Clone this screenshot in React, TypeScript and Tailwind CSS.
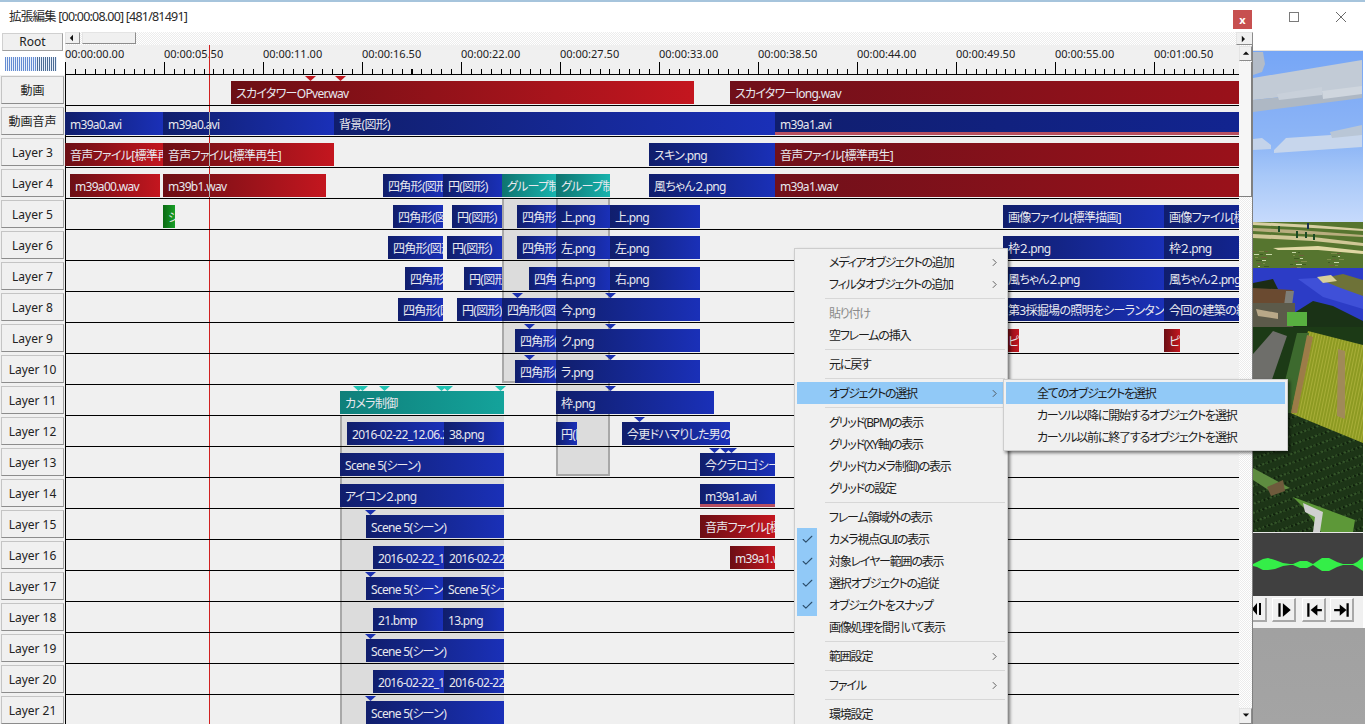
import { Check } from "lucide-react";

type Kind = "blue" | "blueLong" | "red" | "redLong" | "teal" | "tealSoft" | "green";
type Clip = { x: number; end: number; label: string; kind?: Kind; strip?: boolean };
type Mark = { x: number; color: "red" | "blue" | "teal" };

const kinds: Record<Kind, string> = {
  blue: "bg-linear-to-r from-[#101e6c] to-[#1a30b8]",
  blueLong: "bg-linear-to-r from-[#101e6e] to-[#122490]",
  red: "bg-linear-to-r from-[#6c0e14] to-[#c4161f]",
  redLong: "bg-linear-to-r from-[#70101a] to-[#9a111a]",
  teal: "bg-linear-to-r from-[#0f7470] to-[#18b4ae]",
  tealSoft: "bg-linear-to-r from-[#0f7f7a] to-[#14a39b]",
  green: "bg-linear-to-r from-[#0c6a14] to-[#18a028]",
};

const markColors = {
  red: "bg-[#c01820]",
  blue: "bg-[#1a30b0]",
  teal: "bg-[#22c4b4]",
};

const CURSOR = 209;
const LEFT = 65;

const rows: { name: string; clips: Clip[]; marks?: Mark[] }[] = [
  {
    name: "動画",
    marks: [
      { x: 310, color: "red" },
      { x: 340, color: "red" },
    ],
    clips: [
      { x: 231, end: 694, label: "スカイタワーOPver.wav", kind: "red" },
      { x: 730, end: 1239, label: "スカイタワーlong.wav", kind: "redLong" },
    ],
  },
  {
    name: "動画音声",
    clips: [
      { x: 65, end: 163, label: "m39a0.avi" },
      { x: 163, end: 334, label: "m39a0.avi" },
      { x: 334, end: 775, label: "背景(図形)" },
      { x: 775, end: 1239, label: "m39a1.avi", kind: "blueLong", strip: true },
    ],
  },
  {
    name: "Layer 3",
    clips: [
      { x: 65, end: 163, label: "音声ファイル[標準再生]", kind: "red" },
      { x: 163, end: 334, label: "音声ファイル[標準再生]", kind: "red" },
      { x: 649, end: 775, label: "スキン.png" },
      { x: 775, end: 1239, label: "音声ファイル[標準再生]", kind: "redLong" },
    ],
  },
  {
    name: "Layer 4",
    clips: [
      { x: 70, end: 160, label: "m39a00.wav", kind: "red" },
      { x: 163, end: 326, label: "m39b1.wav", kind: "red" },
      { x: 383, end: 443, label: "四角形(図形)" },
      { x: 443, end: 502, label: "円(図形)" },
      { x: 502, end: 556, label: "グループ制御", kind: "teal" },
      { x: 556, end: 610, label: "グループ制御", kind: "teal" },
      { x: 649, end: 775, label: "風ちゃん２.png" },
      { x: 775, end: 1239, label: "m39a1.wav", kind: "redLong" },
    ],
  },
  {
    name: "Layer 5",
    clips: [
      { x: 163, end: 175, label: "シーン", kind: "green" },
      { x: 393, end: 443, label: "四角形(図形)" },
      { x: 452, end: 502, label: "円(図形)" },
      { x: 517, end: 556, label: "四角形(図形)" },
      { x: 556, end: 610, label: "上.png" },
      { x: 610, end: 700, label: "上.png" },
      { x: 1003, end: 1164, label: "画像ファイル[標準描画]" },
      { x: 1164, end: 1239, label: "画像ファイル[標準描画]", kind: "blueLong" },
    ],
  },
  {
    name: "Layer 6",
    clips: [
      { x: 388, end: 443, label: "四角形(図形)" },
      { x: 447, end: 502, label: "円(図形)" },
      { x: 517, end: 556, label: "四角形(図形)" },
      { x: 556, end: 610, label: "左.png" },
      { x: 610, end: 700, label: "左.png" },
      { x: 1003, end: 1164, label: "枠２.png" },
      { x: 1164, end: 1239, label: "枠２.png", kind: "blueLong" },
    ],
  },
  {
    name: "Layer 7",
    clips: [
      { x: 405, end: 443, label: "四角形(図形)" },
      { x: 464, end: 502, label: "円(図形)" },
      { x: 529, end: 556, label: "四角形(図形)" },
      { x: 556, end: 610, label: "右.png" },
      { x: 610, end: 700, label: "右.png" },
      { x: 1003, end: 1164, label: "風ちゃん２.png" },
      { x: 1164, end: 1239, label: "風ちゃん２.png", kind: "blueLong" },
    ],
  },
  {
    name: "Layer 8",
    marks: [
      { x: 517, color: "blue" },
      { x: 610, color: "blue" },
    ],
    clips: [
      { x: 398, end: 443, label: "四角形(図形)" },
      { x: 457, end: 502, label: "円(図形)" },
      { x: 502, end: 556, label: "四角形(図形)" },
      { x: 556, end: 700, label: "今.png" },
      { x: 1003, end: 1164, label: "第3採掘場の照明をシーランタンに" },
      { x: 1164, end: 1239, label: "今回の建築の紹介", kind: "blueLong" },
    ],
  },
  {
    name: "Layer 9",
    marks: [
      { x: 529, color: "blue" },
      { x: 610, color: "blue" },
    ],
    clips: [
      { x: 515, end: 556, label: "四角形(図形)" },
      { x: 556, end: 700, label: "ク.png" },
      { x: 1003, end: 1019, label: "ピース", kind: "red" },
      { x: 1164, end: 1180, label: "ピース", kind: "red" },
    ],
  },
  {
    name: "Layer 10",
    marks: [
      { x: 529, color: "blue" },
      { x: 610, color: "blue" },
    ],
    clips: [
      { x: 515, end: 556, label: "四角形(図形)" },
      { x: 556, end: 700, label: "ラ.png" },
    ],
  },
  {
    name: "Layer 11",
    marks: [
      { x: 358, color: "teal" },
      { x: 362, color: "teal" },
      { x: 384, color: "teal" },
      { x: 441, color: "teal" },
      { x: 447, color: "teal" },
      { x: 500, color: "teal" },
      { x: 610, color: "blue" },
    ],
    clips: [
      { x: 340, end: 504, label: "カメラ制御", kind: "tealSoft" },
      { x: 556, end: 714, label: "枠.png" },
    ],
  },
  {
    name: "Layer 12",
    marks: [{ x: 639, color: "blue" }],
    clips: [
      { x: 347, end: 444, label: "2016-02-22_12.06.25" },
      { x: 444, end: 504, label: "38.png" },
      { x: 556, end: 577, label: "円(図形)" },
      { x: 622, end: 730, label: "今更ドハマりした男の末路" },
    ],
  },
  {
    name: "Layer 13",
    marks: [
      { x: 714, color: "blue" },
      { x: 725, color: "blue" },
      { x: 731, color: "blue" },
    ],
    clips: [
      { x: 340, end: 504, label: "Scene 5(シーン)" },
      { x: 700, end: 775, label: "今クラロゴシーン" },
    ],
  },
  {
    name: "Layer 14",
    clips: [
      { x: 340, end: 504, label: "アイコン２.png" },
      { x: 700, end: 775, label: "m39a1.avi", strip: true },
    ],
  },
  {
    name: "Layer 15",
    marks: [{ x: 370, color: "blue" }],
    clips: [
      { x: 366, end: 504, label: "Scene 5(シーン)" },
      { x: 700, end: 775, label: "音声ファイル[標準再生]", kind: "red" },
    ],
  },
  {
    name: "Layer 16",
    clips: [
      { x: 373, end: 444, label: "2016-02-22_12.06" },
      { x: 444, end: 504, label: "2016-02-22_12.06" },
      { x: 730, end: 775, label: "m39a1.wav", kind: "red" },
    ],
  },
  {
    name: "Layer 17",
    marks: [{ x: 370, color: "blue" }],
    clips: [
      { x: 366, end: 443, label: "Scene 5(シーン)" },
      { x: 443, end: 504, label: "Scene 5(シーン)" },
    ],
  },
  {
    name: "Layer 18",
    clips: [
      { x: 373, end: 443, label: "21.bmp" },
      { x: 443, end: 504, label: "13.png" },
    ],
  },
  {
    name: "Layer 19",
    marks: [{ x: 370, color: "blue" }],
    clips: [{ x: 366, end: 504, label: "Scene 5(シーン)" }],
  },
  {
    name: "Layer 20",
    clips: [
      { x: 373, end: 444, label: "2016-02-22_12.06" },
      { x: 444, end: 504, label: "2016-02-22_12.06" },
    ],
  },
  {
    name: "Layer 21",
    marks: [{ x: 370, color: "blue" }],
    clips: [{ x: 366, end: 504, label: "Scene 5(シーン)" }],
  },
];

const rulerLabels = [
  "00:00:00.00",
  "00:00:05.50",
  "00:00:11.00",
  "00:00:16.50",
  "00:00:22.00",
  "00:00:27.50",
  "00:00:33.00",
  "00:00:38.50",
  "00:00:44.00",
  "00:00:49.50",
  "00:00:55.00",
  "00:01:00.50",
];

// gray group backgrounds behind the clips
const groups = [
  { x: 502, y: 198, w: 54, h: 185, cls: "border-l-2 border-b-2" },
  { x: 556, y: 198, w: 54, h: 278, cls: "border-x-2 border-b-2" },
  { x: 340, y: 416, w: 164, h: 310, cls: "border-l-2" },
];

const menu: (
  | { sep: true }
  | { label: string; arrow?: boolean; off?: boolean; checked?: boolean; hot?: boolean }
)[] = [
  { label: "メディアオブジェクトの追加", arrow: true },
  { label: "フィルタオブジェクトの追加", arrow: true },
  { sep: true },
  { label: "貼り付け", off: true },
  { label: "空フレームの挿入" },
  { sep: true },
  { label: "元に戻す" },
  { sep: true },
  { label: "オブジェクトの選択", arrow: true, hot: true },
  { sep: true },
  { label: "グリッド(BPM)の表示" },
  { label: "グリッド(XY軸)の表示" },
  { label: "グリッド(カメラ制御)の表示" },
  { label: "グリッドの設定" },
  { sep: true },
  { label: "フレーム領域外の表示" },
  { label: "カメラ視点GUIの表示", checked: true },
  { label: "対象レイヤー範囲の表示", checked: true },
  { label: "選択オブジェクトの追従", checked: true },
  { label: "オブジェクトをスナップ", checked: true },
  { label: "画像処理を間引いて表示" },
  { sep: true },
  { label: "範囲設定", arrow: true },
  { sep: true },
  { label: "ファイル", arrow: true },
  { sep: true },
  { label: "環境設定" },
];

const Arrow = ({ dir, className = "" }: { dir: "l" | "r" | "u" | "d"; className?: string }) => {
  const pts = { l: "5,1 5,9 1,5", r: "1,1 1,9 5,5", u: "1,6 9,6 5,2", d: "1,2 9,2 5,6" }[dir];
  return (
    <svg viewBox="0 0 10 10" className={`w-[8px] h-[8px] ${className}`}>
      <polygon points={pts} fill="#111" />
    </svg>
  );
};

const raised =
  "border border-t-[#e4e4e4] border-l-[#e4e4e4] border-r-[#8c8c8c] border-b-[#8c8c8c] bg-[#f0f0f0]";
const hatch = "bg-[repeating-conic-gradient(#ffffff_0_25%,#ececec_0_50%)] bg-[length:2px_2px]";

function LayerButton({ name }: { name: string }) {
  return (
    <div className="h-[31px] pl-px pt-px shrink-0">
      <div className="w-[63px] h-[28px] pt-[2px] border border-t-[#c4c4c4] border-l-[#c4c4c4] border-r-[#a0a0a0] border-b-[#8c8c8c] bg-[#f0f0f0] flex items-center justify-center text-[12px] text-[#222]">
        {name}
      </div>
    </div>
  );
}

function ClipBar({ clip }: { clip: Clip }) {
  return (
    <div
      className={`absolute top-[6px] h-[23px] overflow-hidden whitespace-nowrap pl-[5px] text-[12px] tracking-[-0.7px] leading-[26px] text-[#e8e8ee] ${kinds[clip.kind ?? "blue"]}`}
      style={{ left: clip.x - LEFT, width: clip.end - clip.x }}
    >
      {clip.label}
      {clip.strip && <div className="absolute bottom-0 inset-x-0 h-[3px] bg-[#b85060]" />}
    </div>
  );
}

function Row({ row }: { row: (typeof rows)[number] }) {
  const overCursor = row.clips.some((c) => c.x <= CURSOR && c.end > CURSOR);
  return (
    <div className="relative h-[31px] shrink-0 border-b border-black">
      {row.marks?.map((m, i) => (
        <div
          key={i}
          className={`absolute top-px w-[11px] h-[5px] [clip-path:polygon(0_0,100%_0,50%_100%)] ${markColors[m.color]}`}
          style={{ left: m.x - LEFT - 5 }}
        />
      ))}
      {row.clips.map((c, i) => (
        <ClipBar key={i} clip={c} />
      ))}
      {overCursor && (
        <div
          className="absolute top-[6px] h-[23px] w-px bg-[#a8b0b0]"
          style={{ left: CURSOR - LEFT }}
        />
      )}
    </div>
  );
}

function Ruler() {
  return (
    <div className="relative flex h-[30px] border-b border-black overflow-hidden bg-[#f0f0f0] shrink-0">
      {rulerLabels.map((t) => (
        <div key={t} className="w-[99px] shrink-0 flex flex-col">
          <div className="h-[17px] text-[11px] leading-[17px] text-[#222] whitespace-nowrap">{t}</div>
          <div className="relative flex-1">
            <div className="absolute left-0 bottom-0 h-[12px] w-px bg-black" />
            <div className="absolute inset-x-0 bottom-0 h-[5px] bg-[repeating-linear-gradient(90deg,#000_0_1px,transparent_1px_9.9px)]" />
          </div>
        </div>
      ))}
      <div className="absolute top-0 bottom-0 left-[144px] w-px bg-[#d02020]" />
    </div>
  );
}

function ContextMenu() {
  return (
    <div className="absolute left-[794px] top-[248px] w-[214px] h-[480px] py-[2px] px-[2px] bg-[#f0f0f0] border border-[#cdcdcd] shadow-[2px_2px_3px_rgba(0,0,0,0.5)] text-[12px] tracking-[-1.2px] text-[#1c1c1c]">
      {menu.map((m, i) =>
        "sep" in m ? (
          <div key={i} className="h-[7px] pl-[28px] flex items-center">
            <div className="h-px w-full bg-[#d7d7d7]" />
          </div>
        ) : (
          <div key={i} className={`h-[22px] flex items-center ${m.hot ? "bg-[#91c9f7]" : ""}`}>
            <div
              className={`w-[20px] h-full flex items-center justify-center shrink-0 ${m.checked ? "bg-[#91c9f7]" : ""}`}
            >
              {m.checked && <Check size={13} strokeWidth={2} className="text-[#2d4f6c]" />}
            </div>
            <span className={`ml-[12px] pt-px whitespace-nowrap flex-1 ${m.off ? "text-[#8a8a8a]" : ""}`}>{m.label}</span>
            {m.arrow && (
              <svg viewBox="0 0 6 10" className="w-[5px] h-[9px] mr-[8px]">
                <path d="M1 1l4 4-4 4" fill="none" stroke="#444" strokeWidth="1" />
              </svg>
            )}
          </div>
        )
      )}
    </div>
  );
}

function SubMenu() {
  const items = ["全てのオブジェクトを選択", "カーソル以降に開始するオブジェクトを選択", "カーソル以前に終了するオブジェクトを選択"];
  return (
    <div className="absolute left-[1003px] top-[379px] w-[285px] h-[72px] p-[2px] bg-[#f0f0f0] border border-[#cdcdcd] shadow-[2px_2px_3px_rgba(0,0,0,0.5)] text-[12px] tracking-[-1.2px] text-[#1c1c1c]">
      {items.map((t, i) => (
        <div key={t} className={`h-[22px] flex items-center pl-[31px] pt-px whitespace-nowrap ${i === 0 ? "bg-[#91c9f7]" : ""}`}>
          {t}
        </div>
      ))}
    </div>
  );
}

// dots for the leaf blocks in the game picture
const leafDots = Array.from({ length: 26 }, (_, i) => ({
  x: (i * 7) % 12,
  y: (i * 5) % 12,
  c: i % 3 === 0 ? "#35562a" : i % 3 === 1 ? "#0f1f0c" : "#28461f",
}));

// speckle and dirt lines on the far fields
const fieldSpecks = Array.from({ length: 40 }, (_, i) => ({
  x: (i * 37) % 110,
  y: 200 + ((i * 13) % 18),
  w: 2 + (i % 5),
  c: i % 4 === 0 ? "#6f5e3a" : i % 4 === 1 ? "#3f5c22" : i % 4 === 2 ? "#7d8c4a" : "#c8d8a8",
}));

function GameView() {
  return (
    <div className="w-[110px] h-[481px] bg-[linear-gradient(#76a6f6_0,#86b0f6_60px,#8fb7f6_95px,#a8c8f8_125px,#c6dafc_171px,#c6dafc_100%)]">
      <svg viewBox="0 0 110 481" className="w-[110px] h-[481px] block" preserveAspectRatio="none">
        <defs>
          <pattern id="leaf" width="12" height="12" patternUnits="userSpaceOnUse" patternTransform="rotate(25)">
            <rect width="12" height="12" fill="#1d3517" />
            {leafDots.map((d, i) => (
              <rect key={i} x={d.x} y={d.y} width="2" height="2" fill={d.c} />
            ))}
          </pattern>
          <pattern id="farm" width="3" height="4" patternUnits="userSpaceOnUse" patternTransform="rotate(12)">
            <rect width="3" height="4" fill="#8d9a22" />
            <rect width="1" height="4" fill="#a8ae38" />
          </pattern>
        </defs>
        {/* clouds */}
        <polygon points="0,27 109,9 109,37 0,49" fill="#c2cbd6" />
        <polygon points="0,49 109,37 109,47 0,61" fill="#aeb8c4" />
        <polygon points="24,43 69,36 69,44 26,49" fill="#c8d0da" />
        <polygon points="69,40 109,35 109,43 70,48" fill="#cfd6de" />
        <polygon points="0,1 10,1 12,13 9,21 0,24" fill="#b3bcc8" />
        <polygon points="21,99 33,87 78,84 109,75 109,96 21,102" fill="#c7d6ec" />
        <polygon points="77,81 109,74 109,84 79,87" fill="#b9c6d6" />
        <polygon points="0,88 9,87 18,94 18,98 0,99" fill="#c4d3ea" />
        {/* land */}
        <rect y="171" width="110" height="60" fill="#56752f" />
        {fieldSpecks.map((s, i) => (
          <rect key={i} x={s.x} y={s.y} width={s.w} height="1" fill={s.c} />
        ))}
        <polygon points="0,171 60,174 110,178 110,180 60,177 0,174" fill="#d8cfa2" />
        <polygon points="0,177 45,179 110,184 110,186 50,183 0,180" fill="#b8ad7e" />
        <polygon points="0,183 60,186 110,192 110,195 60,190 0,187" fill="#d0c796" />
        <polygon points="20,197 65,195 110,200 110,203 65,199 25,199" fill="#e0d8a4" />
        <rect x="25" y="175" width="2" height="6" fill="#1c4a24" />
        <rect x="54" y="172" width="2" height="6" fill="#1a3050" />
        <rect x="43" y="180" width="2" height="7" fill="#1c4a24" />
        <rect x="52" y="181" width="2" height="6" fill="#1c4a24" />
        <rect x="60" y="183" width="2" height="6" fill="#1c4a24" />
        {/* water */}
        <rect y="217" width="110" height="60" fill="#2c3cc6" />
        <polygon points="45,228 80,226 110,240 110,258 70,246" fill="#3f50d8" />
        <polygon points="66,228 90,223 110,229 110,245 85,236" fill="#6e7238" />
        <polygon points="64,226 78,224 84,230 70,232" fill="#d8d09a" />
        {/* house */}
        <polygon points="0,232 20,228 25,238 0,238" fill="#1c2c14" />
        <polygon points="0,237 40,239 30,256 0,252" fill="#6a4a30" />
        <polygon points="33,240 41,240 38,262 30,262" fill="#7e7e78" />
        <rect y="252" width="42" height="30" fill="#5c5a4a" />
        <polygon points="3,258 25,262 25,268 5,265" fill="#b8a888" />
        {/* trees */}
        <polygon points="41,262 60,250 80,255 110,270 110,296 57,282 40,280" fill="#1a3216" />
        <rect x="34" y="261" width="20" height="14" fill="#58b040" />
        {/* hedge, stone road, farm */}
        <rect y="276" width="110" height="90" fill="#1c3a16" />
        <polygon points="0,303 20,280 34,285 15,340 0,340" fill="#6e6e6a" />
        <polygon points="55,280 110,294 110,395 37,362" fill="url(#farm)" />
        <polygon points="44,282 56,282 38,362 24,362" fill="#3d6a2e" />
        <polygon points="54,284 60,286 44,362 38,362" fill="#9c7c48" />
        <polygon points="85,298 92,300 92,368 84,365" fill="#a08a58" />
        {/* leaves */}
        <polygon points="0,340 24,362 37,362 110,392 110,481 0,481" fill="url(#leaf)" />
        <polygon points="0,417 37,437 20,442 0,429" fill="#5e8c40" />
        <polygon points="14,436 30,429 32,440 18,445" fill="#6e5a3c" />
        <polygon points="40,446 102,469 100,481 68,481 50,456" fill="#5d9838" />
        <polygon points="50,452 70,461 67,481 60,481 62,466 52,461" fill="#d0d0d0" />
      </svg>
    </div>
  );
}

function Waveform() {
  const top = "0,31 4,29 10,26 15,25 22,27 30,30 37,31 40,31 47,28 54,28 60,31 63,29 69,25 76,25 84,29 90,31 100,31 104,29 110,24";
  const bot = "110,38 104,34 100,32 90,32 84,34 76,38 69,38 63,34 60,32 54,35 47,35 40,32 37,32 30,33 22,36 15,37 10,37 4,34 0,33";
  return (
    <svg viewBox="0 0 110 63" className="w-[110px] h-[63px] block">
      <rect width="110" height="63" fill="#404040" />
      <polygon points={`${top} ${bot}`} fill="#34ee48" />
    </svg>
  );
}

function MediaBtn({ d, className = "" }: { d: string; className?: string }) {
  return (
    <div
      className={`w-[24px] h-[24px] flex items-center justify-center shrink-0 border-r-2 border-b-2 border-r-[#a8a8a8] border-b-[#a8a8a8] border-t border-l border-t-white border-l-white bg-[#f0f0f0] ${className}`}
    >
      <svg viewBox="0 0 16 16" className="w-[18px] h-[18px] shrink-0">
        <path d={d} fill="#000" />
      </svg>
    </div>
  );
}

export default function App() {
  return (
    <div className="relative w-[1365px] h-[724px] overflow-hidden flex bg-[#f0f0f0] font-['Noto_Sans','Noto_Sans_CJK_JP',sans-serif] [font-feature-settings:'palt']">
      {/* timeline window */}
      <div className="w-[1253px] h-full flex flex-col shrink-0 bg-white border-t-2 border-[#a6c4dc]">
        <div className="h-[30px] flex items-center justify-between pl-[9px] pr-px shrink-0">
          <span className="text-[12.5px] tracking-[-0.8px] text-[#2a2a2a] whitespace-nowrap pt-px">拡張編集 [00:00:08.00] [481/81491]</span>
          <div className="w-[19px] h-[19px] mt-[5px] bg-[#c75050] flex items-center justify-center text-white text-[11px] font-bold leading-none">
            x
          </div>
        </div>
        <div className="flex flex-1 min-h-0">
          {/* layer names */}
          <div className="w-[65px] shrink-0 flex flex-col overflow-hidden bg-[#f0f0f0]">
            <div className="h-[43px] shrink-0 bg-white flex flex-col items-start pl-[2px] pt-px">
              <div className="w-[61px] h-[18px] border border-t-[#d0d0d0] border-l-[#d0d0d0] border-r-[#a0a0a0] border-b-[#a0a0a0] bg-[#f0f0f0] flex items-center justify-center text-[12px] text-[#222]">
                Root
              </div>
              <svg viewBox="0 0 52 14" className="w-[52px] h-[14px] ml-[3px] mt-[6px]">
                {Array.from({ length: 26 }, (_, i) => (
                  <rect key={i} x={i * 2} width="1" height="14" fill={i > 15 ? "#2f4f78" : "#4f79c8"} />
                ))}
                <rect width="52" height="14" fill="#a8c8f0" opacity="0.25" />
              </svg>
            </div>
            {rows.map((r) => (
              <LayerButton key={r.name} name={r.name} />
            ))}
          </div>

          <div className="flex-1 flex flex-col min-w-0">
            {/* horizontal scrollbar */}
            <div className={`h-[13px] shrink-0 flex justify-between ${hatch}`}>
              <div className="flex">
                <div className={`w-[15px] h-[12px] flex items-center justify-center ${raised}`}>
                  <Arrow dir="l" />
                </div>
                <div className={`w-[54px] h-[12px] ml-[2px] ${raised}`} />
              </div>
              <div className={`w-[17px] h-[13px] flex items-center justify-center ${raised}`}>
                <Arrow dir="r" />
              </div>
            </div>

            <div className="flex flex-1 min-h-0">
              <div className="w-[1174px] shrink-0 flex flex-col overflow-hidden">
                <Ruler />
                <div className="relative flex-1 bg-[#f0f0f0] border-l border-black">
                  {groups.map((g) => (
                    <div
                      key={g.x}
                      className={`absolute bg-[#dcdcdc] border-[#a8a8a8] ${g.cls}`}
                      style={{ left: g.x - LEFT - 1, top: g.y - 75, width: g.w, height: g.h }}
                    />
                  ))}
                  <div className="absolute top-0 bottom-0 w-px bg-[#d02020]" style={{ left: CURSOR - LEFT - 1 }} />
                  <div className="relative -ml-px">
                    {rows.map((r) => (
                      <Row key={r.name} row={r} />
                    ))}
                  </div>
                </div>
              </div>

              {/* vertical scrollbar */}
              <div className={`w-[14px] shrink-0 flex flex-col justify-between border-r border-[#808080] ${hatch}`}>
                <div>
                  <div className={`h-[15px] mt-px flex items-center justify-center ${raised}`}>
                    <Arrow dir="u" />
                  </div>
                  <div className="h-[135px] mt-px bg-[#f6f6f6] border-r border-b border-[#808080]" />
                </div>
                <div className={`h-[16px] flex items-center justify-center ${raised}`}>
                  <Arrow dir="d" />
                </div>
              </div>
            </div>
          </div>
        </div>
      </div>

      {/* preview window */}
      <div className="w-[112px] h-full flex flex-col shrink-0 bg-linear-to-b from-[#7a7a7a] via-[#989898] to-[#a4a4a4]">
        <div className="h-[628px] shrink-0 bg-white border-t-2 border-[#a6c4dc] pr-[2px]">
          <div className="h-[49px] flex items-start pt-[9px] border-b border-[#e2e2e2]">
            <div className="w-[10px] h-[10px] ml-[36px] mt-px border border-[#7a7a7a]" />
            <svg viewBox="0 0 12 12" className="w-[12px] h-[12px] ml-[36px]">
              <path d="M1 1l10 10M11 1L1 11" stroke="#6a6a6a" strokeWidth="1" fill="none" />
            </svg>
          </div>
          <GameView />
          <div className="h-px bg-[#e8e8e8]" />
          <Waveform />
          <div className="h-[32px] bg-[#f0f0f0] flex items-center pb-[4px] overflow-hidden">
            <div className="w-[14px] h-[24px] shrink-0 overflow-hidden flex justify-end items-center border-r-2 border-b-2 border-[#a8a8a8]">
              <svg viewBox="0 0 14 16" className="w-[14px] h-[18px] shrink-0">
                <path d="M6 2v12L1 8zM8 2h2v12H8z" fill="#000" />
              </svg>
            </div>
            <MediaBtn d="M3 2h2v12H3zM7 2l7 6-7 6z" className="ml-[5px]" />
            <MediaBtn d="M2 2h2v12H2zM5 8l6-5v4h4v2h-4v4z" className="ml-[6px]" />
            <MediaBtn d="M1 7h5V3l6 5-6 5V9H1zM12 2h2v12h-2z" className="ml-[4px]" />
          </div>
        </div>
      </div>

      <ContextMenu />
      <SubMenu />
    </div>
  );
}
